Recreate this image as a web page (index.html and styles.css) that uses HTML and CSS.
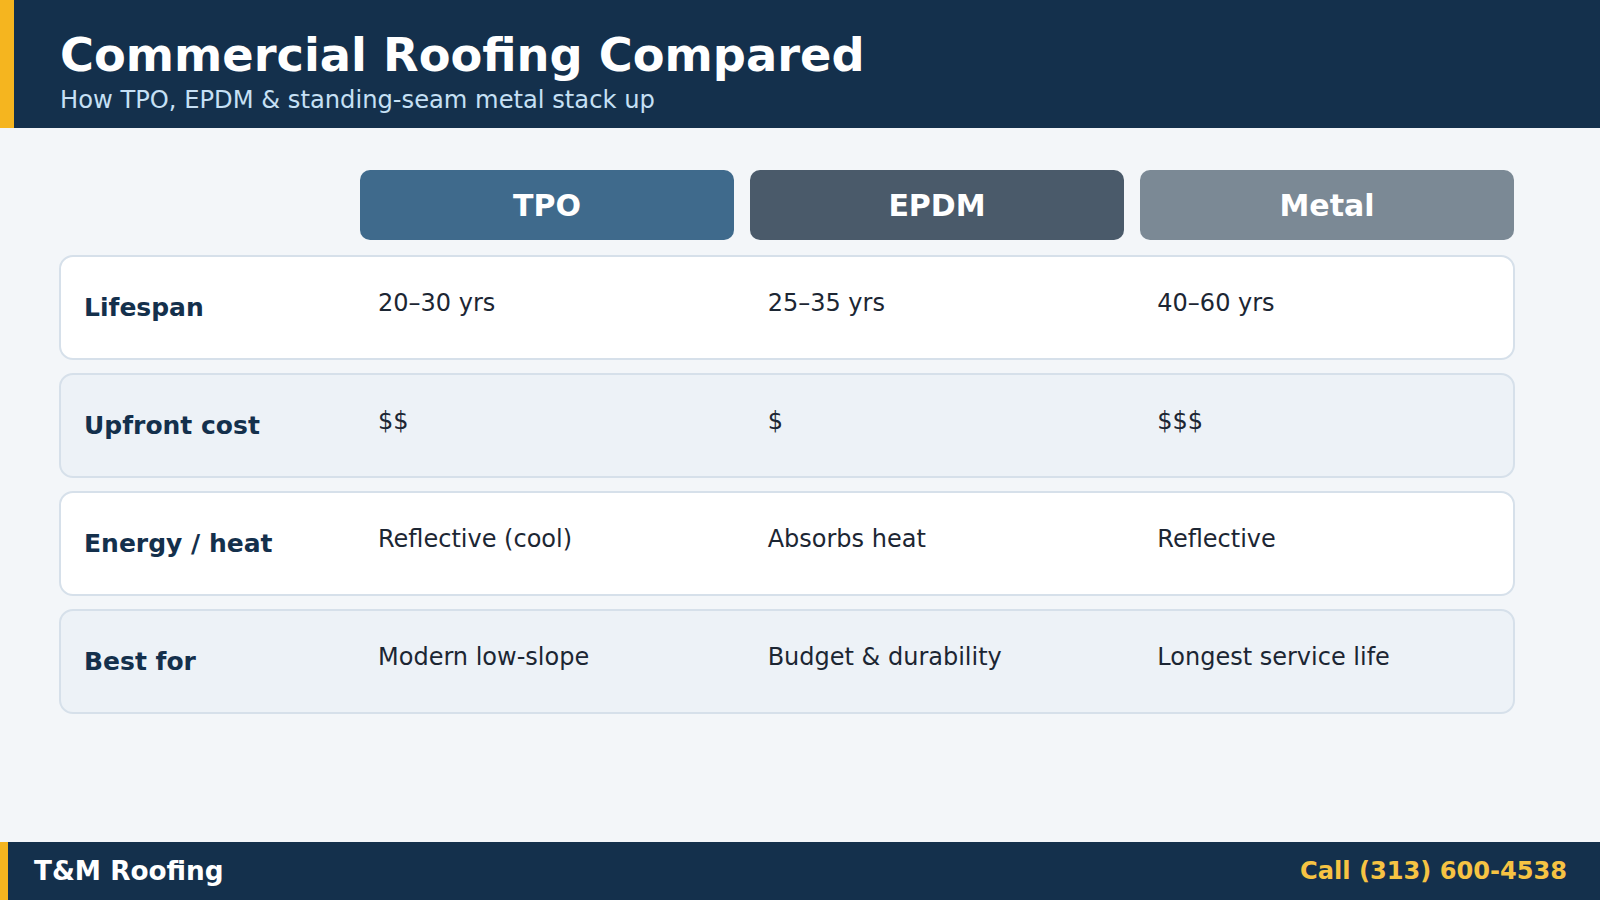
FILE: index.html
```html
<!DOCTYPE html>
<html lang="en">
<head>
<meta charset="utf-8">
<title>Commercial Roofing Compared</title>
<link rel="stylesheet" href="styles.css">
</head>
<body>
<header class="top">
  <h1 class="title">Commercial Roofing Compared</h1>
  <p class="subtitle">How TPO, EPDM &amp; standing-seam metal stack up</p>
</header>
<main class="content">
  <div class="heads">
    <div class="spacer"></div>
    <div class="head head-tpo">TPO</div>
    <div class="head head-epdm">EPDM</div>
    <div class="head head-metal">Metal</div>
  </div>
  <div class="rows">
    <div class="row">
      <div class="label">Lifespan</div>
      <div class="val">20–30 yrs</div>
      <div class="val">25–35 yrs</div>
      <div class="val">40–60 yrs</div>
    </div>
    <div class="row alt">
      <div class="label">Upfront cost</div>
      <div class="val">$$</div>
      <div class="val">$</div>
      <div class="val">$$$</div>
    </div>
    <div class="row">
      <div class="label">Energy / heat</div>
      <div class="val">Reflective (cool)</div>
      <div class="val">Absorbs heat</div>
      <div class="val">Reflective</div>
    </div>
    <div class="row alt">
      <div class="label">Best for</div>
      <div class="val">Modern low-slope</div>
      <div class="val">Budget &amp; durability</div>
      <div class="val">Longest service life</div>
    </div>
  </div>
</main>
<footer class="bottom">
  <span class="brand">T&amp;M Roofing</span>
  <span class="phone">Call (313) 600-4538</span>
</footer>
</body>
</html>
```

FILE: styles.css
```css
* { box-sizing: border-box; }
html, body { margin: 0; padding: 0; }
body {
  width: 1600px;
  height: 900px;
  display: flex;
  flex-direction: column;
  background: #f3f6f9;
  font-family: "DejaVu Sans", sans-serif;
  overflow: hidden;
}
.top {
  height: 128px;
  flex: none;
  background: #14304c;
  border-left: 14px solid #f5b51f;
  padding: 29px 0 0 46px;
}
.title {
  margin: 0;
  font-size: 46.3px;
  line-height: 1.164;
  font-weight: bold;
  color: #ffffff;
}
.subtitle {
  margin: 3px 0 0;
  font-size: 24.2px;
  line-height: 1.164;
  color: #c6e0f5;
}
.content {
  flex: 1;
  padding: 42px 86px 0 60px;
}
.heads {
  display: grid;
  grid-template-columns: 284px repeat(3, 1fr);
  column-gap: 16px;
  height: 70px;
}
.head {
  border-radius: 10px;
  display: flex;
  align-items: center;
  justify-content: center;
  color: #ffffff;
  font-weight: bold;
  font-size: 30px;
}
.head-tpo { background: #3f6a8c; }
.head-epdm { background: #4a5a6a; }
.head-metal { background: #7b8995; }
.rows {
  margin-top: 15px;
  display: flex;
  flex-direction: column;
  gap: 13px;
}
.row {
  height: 105px;
  margin: 0 -1px;
  display: grid;
  grid-template-columns: 283px repeat(3, 1fr);
  column-gap: 16px;
  align-items: center;
  background: #ffffff;
  border: 2px solid #d6e0ea;
  border-radius: 14px;
}
.row.alt { background: #edf2f7; }
.label {
  padding-left: 23px;
  font-size: 25px;
  font-weight: bold;
  color: #14304c;
}
.val {
  padding-left: 18px;
  margin-bottom: 9px;
  font-size: 24px;
  color: #1c2633;
}
.bottom {
  height: 58px;
  flex: none;
  background: #14304c;
  border-left: 8px solid #f5b51f;
  padding: 0 33px 0 26px;
  display: flex;
  align-items: center;
  justify-content: space-between;
  font-weight: bold;
}
.brand { color: #ffffff; font-size: 26.3px; }
.phone { color: #f6c343; font-size: 24.1px; }
```
